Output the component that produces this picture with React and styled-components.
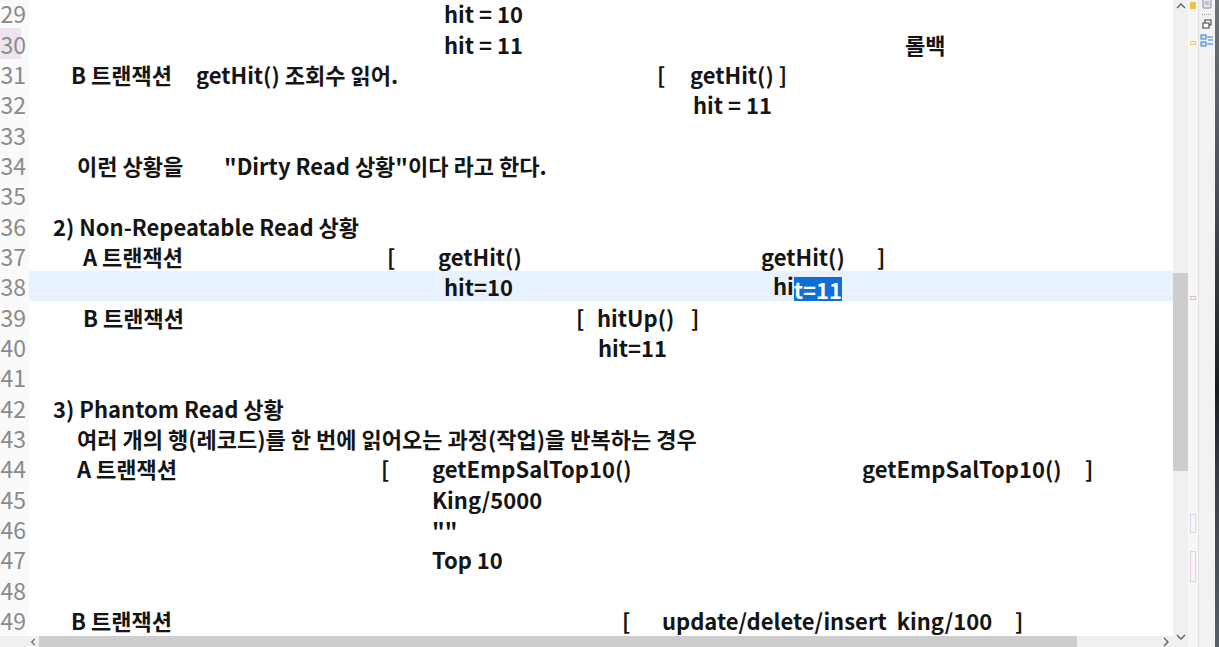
import styled, { createGlobalStyle } from "styled-components";

const GlobalStyle = createGlobalStyle`
    html, body {
        margin: 0;
        padding: 0;
        background: #fff;
        overflow: hidden;
    }
`

const ROW_H = 30.35;
const GUTTER_W = 29;

// 각 줄의 글자 조각: x 는 화면 기준 왼쪽 위치
const LINES = [
    { no: 29, segs: [{ x: 444, t: "hit = 10" }] },
    { no: 30, mark: true, segs: [{ x: 444, t: "hit = 11" }, { x: 905, t: "롤백" }] },
    { no: 31, segs: [{ x: 71, t: "B 트랜잭션" }, { x: 196, t: "getHit() 조회수 읽어." }, { x: 657, t: "[" }, { x: 690, t: "getHit() ]" }] },
    { no: 32, segs: [{ x: 693, t: "hit = 11" }] },
    { no: 33, segs: [] },
    { no: 34, segs: [{ x: 77, t: "이런 상황을" }, { x: 224, t: "\"Dirty Read 상황\"이다 라고 한다." }] },
    { no: 35, segs: [] },
    { no: 36, segs: [{ x: 53, t: "2) Non-Repeatable Read 상황" }] },
    { no: 37, segs: [{ x: 83, t: "A 트랜잭션" }, { x: 387, t: "[" }, { x: 438, t: "getHit()" }, { x: 761, t: "getHit()" }, { x: 877, t: "]" }] },
    { no: 38, current: true, segs: [{ x: 444, t: "hit=10" }, { x: 773, t: "hi", sel: "t=11" }] },
    { no: 39, segs: [{ x: 83, t: "B 트랜잭션" }, { x: 576, t: "[" }, { x: 597, t: "hitUp()" }, { x: 691, t: "]" }] },
    { no: 40, segs: [{ x: 598, t: "hit=11" }] },
    { no: 41, segs: [] },
    { no: 42, segs: [{ x: 53, t: "3) Phantom Read 상황" }] },
    { no: 43, segs: [{ x: 77, t: "여러 개의 행(레코드)를 한 번에 읽어오는 과정(작업)을 반복하는 경우" }] },
    { no: 44, segs: [{ x: 77, t: "A 트랜잭션" }, { x: 381, t: "[" }, { x: 432, t: "getEmpSalTop10()" }, { x: 862, t: "getEmpSalTop10()" }, { x: 1085, t: "]" }] },
    { no: 45, segs: [{ x: 432, t: "King/5000" }] },
    { no: 46, segs: [{ x: 432, t: "\"\"" }] },
    { no: 47, segs: [{ x: 432, t: "Top 10" }] },
    { no: 48, segs: [] },
    { no: 49, segs: [{ x: 71, t: "B 트랜잭션" }, { x: 622, t: "[" }, { x: 662, t: "update/delete/insert  king/100" }, { x: 1015, t: "]" }] },
];

const RULER_MARKS = [
    { top: 2, h: 7, color: "#e9c14b", fill: true },
    { top: 41, h: 4, color: "#ecd06a" },
    { top: 296, h: 4, color: "#e2b8dc" },
    { top: 514, h: 19, color: "#d9d4ef" },
    { top: 551, h: 31, color: "#ecc9e6" },
];

const Window = styled.div`
    display: flex;
    flex-direction: row;
    width: 1219px;
    height: 647px;
    overflow: hidden;
    font-family: "Noto Sans CJK KR", "Noto Sans", sans-serif;
`

const EditorColumn = styled.div`
    display: flex;
    flex-direction: column;
    width: 1173px;
    flex-shrink: 0;
`

const Editor = styled.div`
    flex: 1;
    overflow: hidden;
    background: #fff;
`

const Lines = styled.div`
    display: flex;
    flex-direction: column;
    margin-top: -2px;
`

const Row = styled.div`
    display: flex;
    flex-direction: row;
    height: ${ROW_H}px;
`

const LineNo = styled.div`
    width: ${GUTTER_W}px;
    flex-shrink: 0;
    display: flex;
    justify-content: flex-end;
    align-items: center;
    padding-right: 3px;
    box-sizing: border-box;
    background: ${p => p.$mark
        ? "linear-gradient(to right, #efe3f0 0, #efe3f0 21px, #fafafa 21px)"
        : "#fafafa"};
    color: #8a8a8a;
    font-size: 23px;
    font-weight: 400;
    line-height: 24px;
    white-space: nowrap;
`

const Code = styled.div`
    flex: 1;
    display: grid;
    grid-template-areas: "line";
    align-items: center;
    background: ${p => p.$current ? "#e8f2fe" : "transparent"};
`

const Seg = styled.span`
    grid-area: line;
    padding-left: ${p => p.$x - GUTTER_W}px;
    color: #151515;
    font-size: 22px;
    font-weight: 600;
    white-space: pre;
    line-height: 26px;
`

const Caret = styled.span`
    display: inline-block;
    width: 1px;
    height: 24px;
    background: #333;
    vertical-align: middle;
    margin-right: -1px;
`

const Selected = styled.span`
    background: #0f6fd5;
    color: #fff;
    display: inline-block;
    height: 24px;
    line-height: 24px;
    vertical-align: middle;
`

const HScroll = styled.div`
    height: 11px;
    display: flex;
    align-items: center;
    background: #f0f0f0;
    padding-left: 30px;
`

const Arrow = styled.div`
    width: ${p => p.$w || 10}px;
    height: ${p => p.$h || 10}px;
    display: flex;
    align-items: center;
    justify-content: center;
    flex-shrink: 0;
`

const HThumb = styled.div`
    height: 11px;
    background: #cdcdcd;
    margin-left: 1px;
    flex-shrink: 0;
`

const Spacer = styled.div`
    flex: 1;
`

const VScroll = styled.div`
    width: 15px;
    flex-shrink: 0;
    display: flex;
    flex-direction: column;
    background: #f0f0f0;
`

const VTrack = styled.div`
    flex: 1;
    display: flex;
    flex-direction: column;
`

const VThumb = styled.div`
    width: 15px;
    background: #cdcdcd;
`

const Ruler = styled.div`
    width: 10px;
    flex-shrink: 0;
    background: #f7f7f7;
    border-right: 1px solid #e2e2e2;
    position: relative;
`

const Mark = styled.div`
    position: absolute;
    left: 2px;
    width: 6px;
    box-sizing: border-box;
    border: 1px solid ${p => p.$color};
    background: ${p => p.$fill ? p.$color : "transparent"};
`

const Toolbar = styled.div`
    width: 16px;
    flex-shrink: 0;
    background: #f2f2f2;
    display: flex;
    flex-direction: column;
    align-items: center;
    gap: 3px;
`

const Edge = styled.div`
    width: 4px;
    flex-shrink: 0;
    background: linear-gradient(to bottom, #6e7378 0, #4a4f55 30%, #1a1c20 60%, #3b4048 75%, #5a6068 100%);
`

const Chevron = ({ dir }) => {
    const paths = {
        up: "M1 6 L5 2 L9 6",
        down: "M1 3 L5 7 L9 3",
        left: "M6 1 L2 5 L6 9",
        right: "M3 1 L7 5 L3 9",
    };
    return (
        <svg width="10" height="10" viewBox="0 0 10 10">
            <path d={paths[dir]} fill="none" stroke="#606060" strokeWidth="1.4" />
        </svg>
    );
};

const App = () => {
    const vThumbTop = 273;
    const vThumbH = 198;

    return (
        <>
            <GlobalStyle />
            <Window>
                <EditorColumn>
                    <Editor>
                        <Lines>
                            {LINES.map(line => (
                                <Row key={line.no}>
                                    <LineNo $mark={line.mark}>{line.no}</LineNo>
                                    <Code $current={line.current}>
                                        {line.segs.map((s, i) => (
                                            <Seg key={i} $x={s.x}>
                                                {s.t}
                                                {s.sel && <><Caret /><Selected>{s.sel}</Selected></>}
                                            </Seg>
                                        ))}
                                    </Code>
                                </Row>
                            ))}
                        </Lines>
                    </Editor>
                    <HScroll>
                        <Arrow $w={8}><Chevron dir="left" /></Arrow>
                        <HThumb style={{ width: 1038 }} />
                        <Spacer />
                        <Arrow $w={14}><Chevron dir="right" /></Arrow>
                    </HScroll>
                </EditorColumn>
                <VScroll>
                    <Arrow $w={15} $h={14}><Chevron dir="up" /></Arrow>
                    <VTrack>
                        <VThumb style={{ marginTop: vThumbTop - 14, height: vThumbH }} />
                    </VTrack>
                    <Arrow $w={15} $h={20}><Chevron dir="down" /></Arrow>
                </VScroll>
                <Ruler>
                    {RULER_MARKS.map((m, i) => (
                        <Mark key={i} $color={m.color} $fill={m.fill} style={{ top: m.top, height: m.h }} />
                    ))}
                </Ruler>
                <Toolbar>
                    <svg width="12" height="10" viewBox="0 0 12 10">
                        <rect x="2" y="-2" width="8" height="10" rx="1" fill="#e6e6ee" stroke="#8a8a9a" strokeWidth="1" />
                        <path d="M4 2 H8 M4 4 H8" stroke="#9a9aaa" strokeWidth="1" />
                    </svg>
                    <svg width="12" height="3" viewBox="0 0 12 3">
                        <path d="M1 1.5 H11" stroke="#a0a0a0" strokeWidth="1" strokeDasharray="1 1" />
                    </svg>
                    <svg width="12" height="10" viewBox="0 0 12 10">
                        <rect x="4" y="1" width="6" height="5" fill="#fff" stroke="#555" strokeWidth="1.2" />
                        <rect x="2" y="4" width="6" height="5" fill="#fff" stroke="#555" strokeWidth="1.2" />
                    </svg>
                    <svg width="14" height="14" viewBox="0 0 14 14" style={{ marginTop: 2 }}>
                        <rect x="1" y="1" width="5" height="4" fill="#cfe3fb" stroke="#2f7fd8" strokeWidth="1" />
                        <rect x="1" y="8" width="5" height="4" fill="#cfe3fb" stroke="#2f7fd8" strokeWidth="1" />
                        <path d="M7 3 H13 M8 6 H13 M7 10 H13" stroke="#2f7fd8" strokeWidth="1" />
                    </svg>
                </Toolbar>
                <Edge />
            </Window>
        </>
    );
};

export default App;
